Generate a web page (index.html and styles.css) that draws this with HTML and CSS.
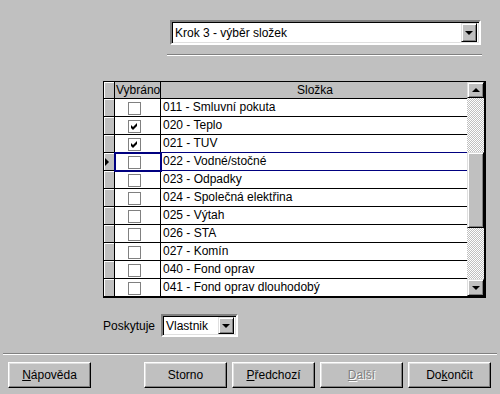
FILE: index.html
```html
<!DOCTYPE html>
<html lang="cs">
<head>
  <meta charset="UTF-8">
  <title>Krok 3 - výběr složek</title>
  <link rel="stylesheet" href="styles.css">
</head>
<body>

  <div class="wizard">
    <div class="step-combo">
      <div class="combo wide">
        <span class="combo-text">Krok 3 - výběr složek</span>
        <span class="drop"><i class="arrow-down"></i></span>
      </div>
    </div>
    <div class="rule short"></div>

    <div class="grid">
      <div class="cols">
        <div class="row head">
          <div class="ind"></div>
          <div class="sel">Vybráno</div>
          <div class="name">Složka</div>
        </div>
        <div class="row"><div class="ind"></div><div class="sel"><span class="box"></span></div><div class="name">011 - Smluvní pokuta</div></div>
        <div class="row"><div class="ind"></div><div class="sel"><span class="box"><svg width="7" height="7" viewBox="0 0 7 7"><path d="M0 2 L2 4 L6 0 L6 3 L2 7 L0 5 Z" fill="#000"/></svg></span></div><div class="name">020 - Teplo</div></div>
        <div class="row pre"><div class="ind"></div><div class="sel"><span class="box"><svg width="7" height="7" viewBox="0 0 7 7"><path d="M0 2 L2 4 L6 0 L6 3 L2 7 L0 5 Z" fill="#000"/></svg></span></div><div class="name">021 - TUV</div></div>
        <div class="row current"><div class="ind"><i class="pointer"></i></div><div class="sel"><span class="box"></span></div><div class="name">022 - Vodné/stočné</div></div>
        <div class="row"><div class="ind"></div><div class="sel"><span class="box"></span></div><div class="name">023 - Odpadky</div></div>
        <div class="row"><div class="ind"></div><div class="sel"><span class="box"></span></div><div class="name">024 - Společná elektřina</div></div>
        <div class="row"><div class="ind"></div><div class="sel"><span class="box"></span></div><div class="name">025 - Výtah</div></div>
        <div class="row"><div class="ind"></div><div class="sel"><span class="box"></span></div><div class="name">026 - STA</div></div>
        <div class="row"><div class="ind"></div><div class="sel"><span class="box"></span></div><div class="name">027 - Komín</div></div>
        <div class="row"><div class="ind"></div><div class="sel"><span class="box"></span></div><div class="name">040 - Fond oprav</div></div>
        <div class="row"><div class="ind"></div><div class="sel"><span class="box"></span></div><div class="name">041 - Fond oprav dlouhodobý</div></div>
      </div>
      <div class="scroll">
        <div class="sbtn"><i class="arrow-up"></i></div>
        <div class="track top-gap"></div>
        <div class="thumb"></div>
        <div class="track"></div>
        <div class="sbtn down"><i class="arrow-down"></i></div>
      </div>
    </div>

    <div class="provider">
      <span class="label">Poskytuje</span>
      <div class="combo small">
        <span class="combo-text">Vlastnik</span>
        <span class="drop"><i class="arrow-down"></i></span>
      </div>
    </div>

    <div class="rule long"></div>

    <div class="buttons">
      <button class="btn first"><u>N</u>ápověda</button>
      <button class="btn">Storno</button>
      <button class="btn"><u>P</u>ředchozí</button>
      <button class="btn" disabled><u>D</u>alší</button>
      <button class="btn">Do<u>k</u>ončit</button>
    </div>
  </div>

</body>
</html>
```

FILE: styles.css
```css
/* base */
* { margin:0; padding:0; box-sizing:border-box }
html, body { height:100%; }
body {
  background:#c0c0c0;
  font-family:"Liberation Sans", Arial, sans-serif;
  font-size:12px;
  color:#000;
}
.wizard { width:500px; height:394px; overflow:hidden; }

/* combo boxes */
.step-combo { padding:20px 0 0 170px; }
.combo {
  display:flex; align-items:center;
  background:#fff;
  border:2px solid; border-color:#808080 #fff #fff #808080;
  box-shadow:inset 1px 1px 0 #000, inset -1px -1px 0 #dfdfdf;
  padding:1px 2px 1px 2px;
}
.combo.wide { width:311px; height:25px; }
.combo.small { width:77px; height:23px; }
.combo-text { flex:1; padding-left:1px; white-space:nowrap; }
.drop {
  display:flex; align-items:center; justify-content:center;
  width:16px; height:100%;
  background:#c0c0c0;
  border:1px solid; border-color:#dfdfdf #000 #000 #dfdfdf;
  box-shadow:inset 1px 1px 0 #fff, inset -1px -1px 0 #808080;
}

/* arrows */
.arrow-down, .arrow-up { display:block; width:0; height:0; border-left:4px solid transparent; border-right:4px solid transparent; }
.arrow-down { border-top:4px solid #000; }
.arrow-up { border-bottom:4px solid #000; }

/* etched lines */
.rule { height:2px; border-top:1px solid #808080; border-bottom:1px solid #fff; }
.rule.short { margin:9px 0 0 167px; width:315px; }
.rule.long { margin:16px 3px 0 3px; }

/* grid */
.grid {
  display:flex;
  margin:25px 0 0 103px;
  width:383px; height:217px;
  border:solid #000; border-width:1px 2px 2px 1px;
  overflow:hidden;
}
.cols { flex:1; background:#fff; }
.row { display:flex; height:18px; }
.row.head { height:17px; }
.row > div { border-bottom:1px solid #000; }
.ind {
  width:11px; border-right:1px solid #000;
  background:#c0c0c0;
  box-shadow:inset 1px 1px 0 #fff;
  display:flex; align-items:center;
}
.sel {
  width:46px; border-right:1px solid #000;
  display:flex; justify-content:flex-start;
  white-space:nowrap;
}
.name { flex:1; padding-left:2px; line-height:17px; white-space:nowrap; }
.head > div { background:#c0c0c0; line-height:16px; }
.head .sel { padding-left:1px; }
.head .name { text-align:center; }

.box {
  display:flex; align-items:center; justify-content:center;
  width:13px; height:13px;
  margin:3px 0 0 13px;
  border:1px solid #808080; background:#fff;
}

/* current row */
.current .sel { outline:2px solid #000080; outline-offset:-1px; position:relative; z-index:1; }
.current .name, .pre .name { border-bottom-color:#000080; }
.pointer { display:block; width:0; height:0; margin-left:1px; border-left:4px solid #000; border-top:4px solid transparent; border-bottom:4px solid transparent; }

/* scrollbar */
.scroll { width:17px; display:flex; flex-direction:column; }
.sbtn, .thumb {
  background:#c0c0c0;
  border:1px solid; border-color:#dfdfdf #000 #000 #dfdfdf;
  box-shadow:inset 1px 1px 0 #fff, inset -1px -1px 0 #808080;
}
.sbtn { height:16px; display:flex; align-items:center; justify-content:center; }
.sbtn.down { height:17px; }
.thumb { height:76px; }
.track {
  flex:1;
  background:repeating-conic-gradient(#fff 0 25%, #c0c0c0 0 50%) 0 0/2px 2px;
}
.track.top-gap { flex:none; height:54px; }

/* provider row */
.provider { display:flex; align-items:center; margin:16px 0 0 103px; }
.label { width:58px; }

/* buttons */
.buttons { display:flex; gap:5px; padding:7px 9px 0 8px; }
.btn {
  width:83px; height:26px;
  font:inherit; color:#000;
  background:#c0c0c0;
  border:1px solid; border-color:#fff #000 #000 #fff;
  box-shadow:inset -1px -1px 0 #808080, inset 1px 1px 0 #dfdfdf;
}
.btn.first { margin-right:auto; }
.btn:disabled { color:#808080; text-shadow:1px 1px 0 #fff; }
```
